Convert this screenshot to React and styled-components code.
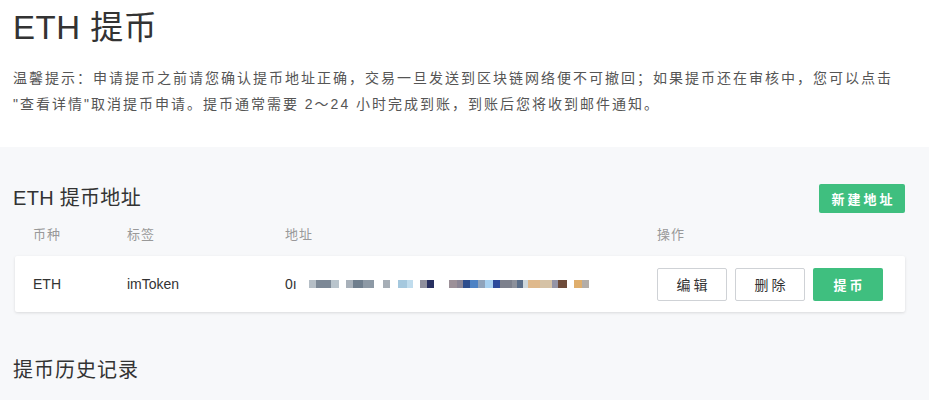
import React from "react";
import styled, { createGlobalStyle } from "styled-components";

const Global = createGlobalStyle`
  html, body { margin: 0; padding: 0; background: #fff; }
  body { font-family: "Liberation Sans", "Noto Sans CJK SC", sans-serif; color: #333; }
  #root { min-height: 400px; display: flex; flex-direction: column; }
`;

const Page = styled.div`
  flex: 1;
  display: flex;
  flex-direction: column;
`;

const Intro = styled.header`
  padding: 0 13px;
`;

const Title = styled.h1`
  margin: 0;
  font-size: 33px;
  font-weight: 400;
  line-height: 56px;
  color: #333;
  letter-spacing: 0.5px;
`;

const Tip = styled.p`
  margin: 9px 0 0;
  font-size: 14px;
  line-height: 26px;
  letter-spacing: 2px;
  color: #555;
  white-space: nowrap;
`;

const Panel = styled.section`
  flex: 1;
  margin-top: 30px;
  background: #f7f8fa;
  padding: 37px 24px 0 13px;
`;

const PanelHead = styled.div`
  display: flex;
  align-items: center;
  justify-content: space-between;
`;

const SectionTitle = styled.h2`
  margin: 0;
  font-size: 20px;
  font-weight: 400;
  line-height: 29px;
  color: #333;
  letter-spacing: ${p => p.$spacing || "0.3px"};
`;

const GreenButton = styled.button`
  border: 0;
  border-radius: 2px;
  background: #3fbf7f;
  color: #fff;
  font-family: inherit;
  font-weight: 700;
  font-size: 13px;
  letter-spacing: 3px;
  height: ${p => p.$h || 29}px;
  width: ${p => p.$w || 86}px;
  padding: 0 0 0 3px;
  cursor: pointer;
`;

const OutlineButton = styled.button`
  border: 1px solid #cfd2d6;
  border-radius: 2px;
  background: #fff;
  color: #333;
  font-family: inherit;
  font-size: 14px;
  letter-spacing: 3px;
  height: 33px;
  width: 70px;
  padding: 0 0 0 3px;
  cursor: pointer;
`;

const Table = styled.div`
  padding-left: 2px;
  margin-top: 5px;
`;

const Row = styled.div`
  display: grid;
  grid-template-columns: 94px 158px 372px 1fr;
  align-items: center;
  padding: 0 22px 0 18px;
`;

const HeadRow = styled(Row)`
  height: 30px;
  font-size: 13px;
  color: #999;
  letter-spacing: 1px;
`;

const BodyRow = styled(Row)`
  margin-top: 8px;
  height: 56px;
  background: #fff;
  border-radius: 2px;
  box-shadow: 0 1px 3px rgba(0, 0, 0, 0.12);
  font-size: 14px;
  color: #333;
`;

const Actions = styled.div`
  display: flex;
  gap: 8px;
`;

const Address = styled.div`
  display: flex;
  align-items: center;
`;

const AddrStart = styled.span`
  width: 24px;
  font-size: 14px;
`;

const Mosaic = styled.div`
  display: flex;
  height: 8px;
`;

const Pixel = styled.span`
  display: block;
  height: 8px;
  width: ${p => p.$w}px;
  background: ${p => p.$c};
`;

const History = styled(SectionTitle)`
  margin-top: 43px;
  line-height: 30px;
`;

const pixels = [
  [7, "#b5bec6"], [15, "#7c8896"], [8, "#b9c4cc"], [7, "transparent"],
  [7, "#a8b1ba"], [10, "#6f7e8d"], [11, "#8d99a5"], [9, "transparent"],
  [7, "#a6aeb6"], [8, "transparent"],
  [9, "#a5c8de"], [6, "#c0dced"], [7, "transparent"],
  [7, "#8f8f9c"], [7, "#283060"], [15, "transparent"],
  [8, "#9c9098"], [6, "#8a8595"], [7, "#2e4d8c"], [8, "#4d82c4"], [7, "#8fa3bb"],
  [8, "#a7d0f0"], [7, "#2c4a9c"], [12, "#7c808c"], [5, "#8c909a"], [6, "#5a6e89"],
  [5, "#cfd8dc"], [12, "#dfb98c"], [12, "#d5c2a6"], [6, "#9494a6"], [9, "#6e4b3a"],
  [7, "transparent"], [8, "#dfae6c"], [7, "#b3ada8"],
];

export default function App() {
  return (
    <Page>
      <Global />
      <Intro>
        <Title>ETH 提币</Title>
        <Tip>
          温馨提示：申请提币之前请您确认提币地址正确，交易一旦发送到区块链网络便不可撤回；如果提币还在审核中，您可以点击
          <br />
          "查看详情"取消提币申请。提币通常需要 2～24 小时完成到账，到账后您将收到邮件通知。
        </Tip>
      </Intro>
      <Panel>
        <PanelHead>
          <SectionTitle>ETH 提币地址</SectionTitle>
          <GreenButton>新建地址</GreenButton>
        </PanelHead>
        <Table>
          <HeadRow>
            <span>币种</span>
            <span>标签</span>
            <span>地址</span>
            <span>操作</span>
          </HeadRow>
          <BodyRow>
            <span>ETH</span>
            <span>imToken</span>
            <Address>
              <AddrStart>0ı</AddrStart>
              <Mosaic>
                {pixels.map(([w, c], i) => (
                  <Pixel key={i} $w={w} $c={c} />
                ))}
              </Mosaic>
            </Address>
            <Actions>
              <OutlineButton>编辑</OutlineButton>
              <OutlineButton>删除</OutlineButton>
              <GreenButton $w={70} $h={33}>提币</GreenButton>
            </Actions>
          </BodyRow>
        </Table>
        <History $spacing="1px">提币历史记录</History>
      </Panel>
    </Page>
  );
}
